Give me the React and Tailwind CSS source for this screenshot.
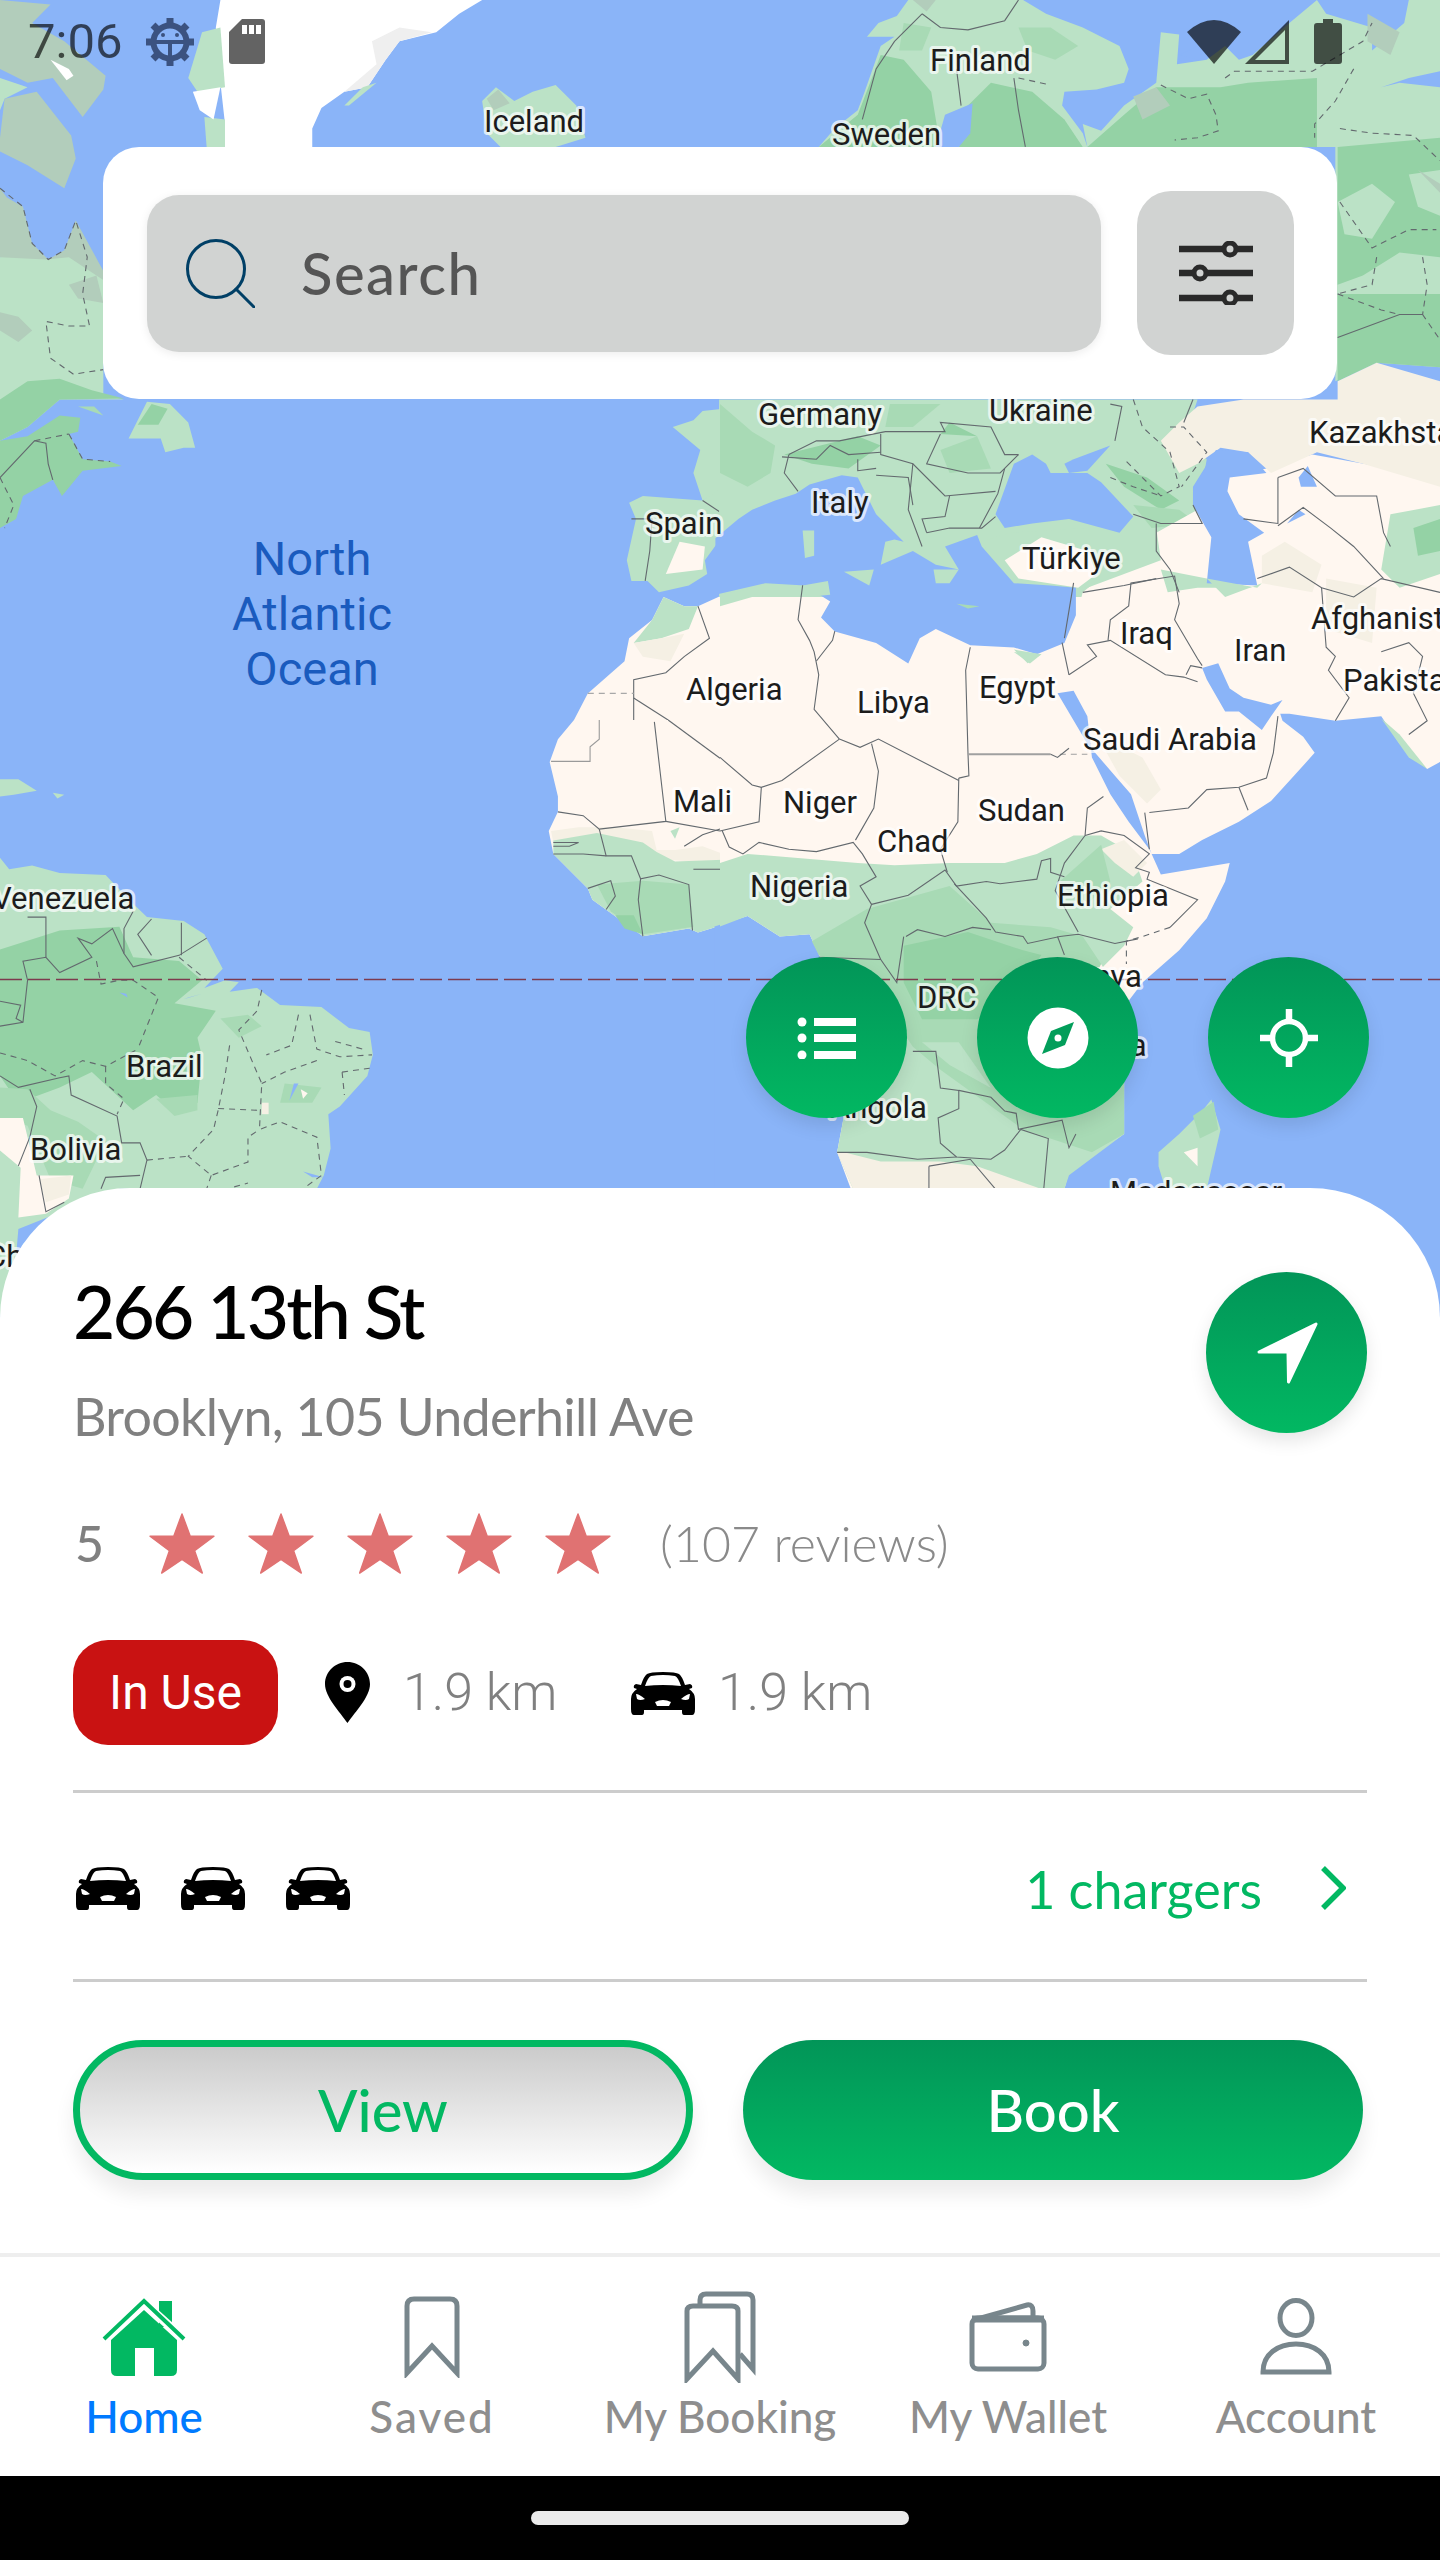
const LIGHT = '#BBE2C6';
const MID = '#94D2A5';
const SOFT = '#A8DAB5';
const TUNDRA = '#B2CDBB';
const DESERT = '#FFF7F0';
const SAND = '#F5F0E4';
const WATER = '#8AB4F8';
const SNOW = '#FFFFFF';

// map shapes are traced per crop of the reference, so each group has its own scale
const westNorth = [
  [TUNDRA, '0,0 110,10 70,50 140,90 230,165 225,195 180,255 115,170 60,180 20,160 0,150'],
  [LIGHT, '0,240 10,215 60,190 0,170'],
  [TUNDRA, '0,300 10,215 80,200 155,295 165,345 140,410 60,360 0,330'],
  [TUNDRA, '0,410 15,430 50,450 70,530 105,565 140,545 165,480 225,590 225,680 150,640 60,600 0,560'],
  [LIGHT, '0,560 100,565 150,560 225,610 225,860 270,870 130,870 60,930 0,960'],
  [TUNDRA, '0,680 40,690 70,720 40,745 0,720'],
  [TUNDRA, '150,620 210,600 225,660 170,650'],
  [MID, '0,870 60,830 130,825 200,850 270,868 130,870 60,930 0,960'],
  [MID, '0,960 60,950 130,905 175,910 170,940 150,945 180,1000 240,1005 265,1015 180,1025 135,1080 115,1045 50,1080 35,1130 0,1150'],
  [SOFT, '170,885 205,885 225,905'],
  [LIGHT, '280,955 320,875 370,880 410,920 425,975 400,975 360,985 350,955'],
  [MID, '300,925 330,880 365,890 345,925'],
  [SNOW, '480,0 1050,0 1000,30 950,70 870,90 840,130 800,190 750,200 700,235 680,280 680,320 480,320 490,270 480,180 470,60'],
  ['#EFEFEF', '810,90 870,60 940,70 870,90 840,130 800,190 750,200 820,140'],
  [LIGHT, '410,170 440,70 480,60 490,190 430,200'],
  [LIGHT, '445,255 490,260 490,320 450,320'],
  [SNOW, '420,200 480,190 465,260 435,240'],
  [LIGHT, '750,230 790,190 820,180 760,230'],
  [SNOW, '110,130 150,150 160,165 145,175'],
  [LIGHT, '1050,220 1080,190 1120,220 1160,200 1210,185 1255,230 1275,300 1210,320 1090,320 1060,290'],
  [TUNDRA, '1060,215 1085,195 1110,225 1075,240'],
  [LIGHT, '1370,1095 1400,1080 1530,1090 1575,1050 1575,1165 1535,1220 1540,1250 1500,1275 1435,1290 1410,1265 1375,1265 1365,1220 1385,1130'],
  [DESERT, '1480,1180 1535,1190 1530,1240 1450,1250'],
  [LIGHT, '1465,930 1510,915 1530,895 1575,890 1575,1060 1530,1090 1510,1030 1525,980'],
  [DESERT, '1445,1300 1490,1320 1520,1320 1575,1295 1575,1568 1250,1568 1280,1510 1360,1440 1370,1390 1420,1350'],
  [LIGHT, '1445,1300 1490,1320 1520,1320 1500,1370 1440,1390 1380,1400 1420,1350'],
  [SAND, '1380,1400 1440,1390 1490,1380 1460,1440 1400,1430'],
];
const westNorthLines = [
  { p: '0,410 50,450 70,530 105,565 140,545 165,480 190,560 180,640 195,710 150,710 100,700 110,780 160,815 225,805', d: true },
  { p: '0,1040 75,960 100,965 105,1010 115,1045' },
  { p: '75,960 150,945', d: true },
  { p: '150,945 180,1000 240,1005', d: true },
  { p: '0,1040 30,1100 10,1150', d: true },
  { p: '1375,1130 1420,1130 1415,1200 1405,1265' },
  { p: '1530,1090 1568,1115' },
  { p: '1520,1320 1545,1390 1490,1430 1450,1465 1380,1480 1380,1568' },
  { p: '1280,1510 1380,1510', d: true, c: '#A8A8A8' },
  { p: '1380,1520 1455,1568' },
];

const southAmerica = [
  [LIGHT, '0,360 20,390 70,380 130,400 230,405 290,480 320,515 400,525 445,560 485,650 445,700 490,680 520,685 500,710 560,700 610,745 700,750 760,805 805,815 812,875 800,930 740,1010 715,1030 720,1120 705,1190 690,1225 260,1225 40,1330 35,1400 10,1480 0,1568 0,1125'],
  [MID, '0,600 130,550 260,540 290,620 390,630 440,680 380,740 470,760 430,830 440,880 430,1000 390,1030 340,980 290,1020 200,920 130,960 40,1000 0,930'],
  [SOFT, '0,960 60,965 110,1020 170,1050 230,1100 180,1225 110,1200 60,1060 0,1040'],
  [SOFT, '340,990 430,980 430,1020 380,1035'],
  [SOFT, '480,780 540,770 570,800 520,830'],
  [SOFT, '620,950 700,960 680,1000 610,1000'],
  [DESERT, '0,1040 50,1040 80,1190 160,1190 150,1250 100,1290 40,1300 45,1170 0,1125'],
  [SAND, '85,1200 155,1190 150,1240 100,1260'],
  [LIGHT, '0,155 40,155 80,185 30,195 0,200'],
  [LIGHT, '115,190 140,195 125,205'],
  [WATER, '640,950 650,950 630,995'],
  [WATER, '660,1180 705,1195 680,1195'],
  [DESERT, '655,965 670,975 660,990'],
  [SAND, '570,1000 585,1000 585,1030 570,1030'],
  [WATER, '260,712 275,715 278,725'],
  [WATER, '400,730 440,715 410,725'],
  [DESERT, '1250,0 1215,50 1197,110 1215,200 1215,240 1195,290 1205,350 1280,440 1290,470 1400,565 1500,545 1520,555 1575,535 1575,0'],
  [SAND, '1200,290 1260,280 1340,280 1420,290 1430,340 1470,340 1530,330 1575,350 1575,375 1450,365 1400,330 1300,300 1205,320'],
  [LIGHT, '1205,315 1300,295 1400,320 1430,345 1470,370 1575,365 1575,535 1520,555 1500,545 1400,565 1290,470 1280,440 1205,350'],
  [SOFT, '1300,430 1400,420 1500,430 1510,540 1400,560 1330,500'],
  [MID, '1340,510 1380,510 1400,560 1360,545'],
  [LIGHT, '1460,290 1480,280 1470,310'],
];
const southAmericaLines = [
  { p: '0,800 50,790 60,680 50,630 100,620 130,660 200,620 170,570 200,585 245,545 270,610 290,645 390,615 450,570' },
  { p: '0,735 45,745 35,780 50,790' },
  { p: '100,620 100,515 60,515' },
  { p: '290,500 270,545 270,610' },
  { p: '330,520 300,560 330,615' },
  { p: '395,530 395,615' },
  { p: '0,930 40,960 130,935 150,930 155,980 255,1035 265,1105 305,1105 320,1150 305,1225' },
  { p: '65,965 80,1010 65,1090 40,1165' },
  { p: '220,1225 230,1195 305,1190' },
  { p: '85,1190 100,1285 140,1260' },
  { p: '210,630 220,690 260,680 290,680 345,725 300,860', d: true },
  { p: '390,620 450,680', d: true },
  { p: '0,870 60,890 120,930 180,890 230,905 300,860', d: true },
  { p: '230,905 230,950 270,990 255,1030', d: true },
  { p: '570,705 560,760 520,810 545,880 570,950 565,1070 610,1050 690,1090 700,1190 660,1225', d: true },
  { p: '650,770 635,850 580,875', d: true },
  { p: '675,770 690,860 740,880 810,875', d: true },
  { p: '745,920 805,910', d: true },
  { p: '690,890 620,920 570,950', d: true },
  { p: '745,920 750,980', d: true },
  { p: '730,840 760,850 790,860', d: true },
  { p: '500,850 490,930 475,1020 465,1070 410,1140 460,1190 540,1155 540,1090 565,1070', d: true },
  { p: '475,1015 565,1020', d: true },
  { p: '320,1150 410,1140', d: true },
  { p: '460,1190 450,1225', d: true },
  { p: '510,1220 540,1210', d: true },
  { p: '1425,5 1450,265 1305,285 1270,250 1215,240' },
  { p: '1450,265 1568,290' },
  { p: '1305,0 1305,50 1285,70 1285,108 1200,108', c: '#9A9A9A' },
  { p: '1455,0 1568,100' },
  { p: '1305,285 1320,355 1375,355 1395,415 1435,405 1500,430 1508,550' },
  { p: '1205,350 1270,350 1320,355' },
  { p: '1205,320 1260,320 1240,330 1205,330' },
  { p: '1395,415 1390,470 1400,565' },
  { p: '1280,440 1330,420 1340,460 1320,495' },
  { p: '1510,390 1568,390' },
  { p: '1490,330 1530,300 1568,285' },
];

const north = [
  [LIGHT, '215,320 250,280 300,240 315,200 350,100 380,80 320,80 345,50 385,35 410,0 660,0 710,30 790,60 870,100 890,150 880,180 820,195 750,200 745,230 790,290 800,320'],
  [LIGHT, '800,320 790,270 830,285 880,230 950,180 960,70 1000,75 995,140 1060,130 1100,100 1130,130 1160,120 1240,50 1300,0 1320,30 1420,60 1420,110 1490,50 1500,0 1568,0 1568,320'],
  [LIGHT, '1340,320 1568,320 1568,800 1430,790 1340,830'],
  [MID, '215,320 300,250 350,120 400,130 460,200 480,320'],
  [MID, '590,180 680,200 750,260 790,320 520,320 540,230'],
  [MID, '800,320 880,250 950,190 1090,190 1150,180 1300,170 1300,320'],
  [MID, '1345,320 1568,300 1568,560 1480,550 1400,600 1345,620'],
  [MID, '1345,640 1568,640 1568,800 1430,790 1345,830'],
  [LIGHT, '1345,440 1420,400 1470,440 1420,520 1360,510'],
  [LIGHT, '1500,380 1568,370 1568,470 1520,450'],
  [TUNDRA, '1520,370 1568,400 1568,420'],
  [TUNDRA, '900,210 950,190 980,230 920,260'],
  [TUNDRA, '1410,30 1480,70 1460,120 1410,90'],
  [SOFT, '650,60 720,60 780,100 730,130 670,110'],
  [SOFT, '400,50 460,60 440,110 390,110'],
  [TUNDRA, '420,0 470,0 450,25'],
  [WATER, '470,320 490,250 550,225 545,290 520,320'],
  [WATER, '1440,190 1480,180 1568,190 1568,155 1500,170'],
  [WATER, '1000,120 1060,90 1045,130'],
  [LIGHT, '-2,870 1040,870 1010,960 1060,1000 1040,1110 1100,1300 960,1300 780,1300 -2,1300'],
  [SOFT, '0,880 70,940 120,970 110,1030 60,1060 0,1030'],
  [MID, '140,990 300,950 350,970 280,1020 200,1010'],
  [SOFT, '370,880 480,880 420,930 360,930'],
  [SOFT, '480,980 560,950 590,1020 500,1030'],
  [MID, '500,920 560,950 480,945'],
  [MID, '840,1010 930,1040 1000,1090 960,1110 880,1060'],
  [SOFT, '900,1100 1000,1110 1040,1140 940,1150'],
  [DESERT, '950,1160 1040,1110 1100,1040 1190,1020 1290,990 1568,1040 1568,1568 950,1568 760,1400 790,1290'],
  [SAND, '1000,920 1040,885 1140,870 1345,870 1345,830 1430,790 1568,830 1568,1060 1400,1010 1300,985 1200,1030 1150,985 1090,975 1040,1010 1000,1030 960,960'],
  [LIGHT, '1460,1120 1568,1100 1568,1250 1480,1280 1440,1240'],
  [MID, '1510,1150 1568,1130 1568,1200 1520,1210'],
  [SAND, '1230,1180 1310,1230 1290,1290 1180,1270 1180,1210'],
  [SAND, '1320,1260 1430,1280 1420,1400 1320,1370'],
  [LIGHT, '960,1240 1060,1260 1160,1280 1040,1280 975,1290'],
  [LIGHT, '570,1180 630,1160 800,1150 950,1150 960,1220 800,1280 690,1275 620,1270'],
  [DESERT, '620,1220 700,1170 800,1200 820,1250 780,1280 650,1260'],
];
const northWater = [
  '-10,1172 40,1130 70,1110 120,1090 165,1075 195,1055 265,1035 300,1040 340,1120 400,1180 380,1175 360,1180 350,1230 420,1200 470,1230 520,1240 490,1190 560,1165 570,1190 640,1270 720,1275 775,1280 775,1340 750,1400 690,1425 640,1410 545,1405 470,1370 435,1390 410,1445 340,1400 250,1375 220,1345 240,1310 185,1275 100,1270 -10,1295',
  '600,1120 640,1010 680,990 710,1010 720,1030 750,1030 800,1030 830,1050 900,1125 870,1160 760,1130 680,1140 620,1150',
  '750,1010 770,1000 850,970 800,1025 760,1030',
  '1030,1060 1080,980 1150,985 1190,1030 1110,1040 1105,1070 1130,1120 1185,1160 1150,1180 1170,1275 1060,1270 1070,1170 1030,1100',
  '1260,1040 1280,1015 1300,1060 1265,1060',
  '1235,1140 1260,1110 1275,1120',
];
const northIslands = [
  [LIGHT, '180,1155 205,1155 205,1210 185,1215'],
  [LIGHT, '270,1245 335,1240 325,1275'],
  [SOFT, '515,1315 565,1320 540,1325'],
  [LIGHT, '465,1240 520,1240 500,1270 470,1270'],
  [LIGHT, '180,1275 235,1265 240,1295 190,1300'],
  [LIGHT, '0,1295 60,1285 100,1270 70,1300 0,1320'],
  [LIGHT, '640,1420 700,1425 675,1445'],
  [LIGHT, '1060,1260 1170,1280 1180,1270 1100,1300'],
];
const northLines = [
  { p: '440,30 380,90 340,150 310,260' },
  { p: '515,150 525,230' },
  { p: '640,170 650,240 665,320' },
  { p: '440,30 480,60 540,65 620,45 650,0' },
  { p: '650,170 720,185', d: true },
  { p: '960,185 1020,215 1060,205 1080,250 1085,285 1040,300 990,305', d: true },
  { p: '1100,170 1120,155 1290,155 1400,90 1420,50', d: true },
  { p: '1380,150 1340,220 1295,270 1295,300', d: true },
  { p: '1350,280 1420,290 1510,295 1568,350', d: true },
  { p: '1350,440 1420,540 1500,500 1560,500', d: true },
  { p: '1430,560 1420,620 1345,640', d: true },
  { p: '1345,640 1440,675 1480,685 1530,685 1568,740', d: true },
  { p: '1345,735 1480,685 1530,685' },
  { p: '1530,560 1540,620 1530,685', d: true },
  { p: '900,870 920,930 980,985 1000,1060 960,1080 880,1000', d: true },
  { p: '980,930 1010,930 1060,985 1005,1060', d: true },
  { p: '850,1040 900,1060 960,1080', d: true },
  { p: '1030,870 1010,920' },
  { p: '150,990 210,960 260,960 360,940 490,940 480,920 590,930 620,990 650,990' },
  { p: '350,945 350,990 420,1010 470,1060 490,1080 600,1070' },
  { p: '480,945 450,1010 540,1030 610,1030 650,990' },
  { p: '620,1020 605,1075 565,1150' },
  { p: '420,1010 410,1110 440,1190' },
  { p: '340,1035 410,1040 420,1100' },
  { p: '150,990 140,1030 170,1070' },
  { p: '135,995 210,1000 240,970 280,990 350,985' },
  { p: '300,1000 300,1025 340,1020' },
  { p: '450,1160 500,1150 570,1150 600,1125' },
  { p: '500,1080 490,1125 440,1130 450,1160' },
  { p: '850,880 875,885 860,960' },
  { p: '900,1120 960,1140 1050,1140 1030,1100' },
  { p: '950,1140 950,1200 980,1240 1000,1290' },
  { p: '790,1290 880,1275 950,1260' },
  { p: '1215,1040 1215,1140 1140,1130' },
  { p: '1215,1040 1270,1020 1340,1080 1430,1080 1445,1160 1460,1190' },
  { p: '1215,1145 1270,1105 1330,1150 1380,1190 1445,1260' },
  { p: '1170,1260 1240,1235 1310,1280 1380,1300 1440,1260 1568,1290' },
];

const south = [
  [DESERT, '0,50 1568,-10 1568,440 1300,900 880,1370 6,1370 6,800 0,800'],
  [SAND, '1390,0 1568,0 1568,200 1440,250 1500,330 1340,340 1250,250 1240,120'],
  [SAND, '1000,90 1060,70 1100,150 1000,150'],
  [SAND, '820,380 920,430 960,500 930,530 870,470'],
];
const southWater = [
  '735,290 770,285 800,340 810,430 850,510 890,570 935,630 940,640 925,600 895,510 860,470 800,400',
  '940,640 1000,640 1050,610 1130,570 1200,525 1250,470 1295,420 1270,385 1225,350 1220,335 1240,335 1340,350 1440,340 1480,400 1540,455 1568,440 1568,1370 750,1370 760,1330 880,1250 880,1020 890,960 920,920 1000,850 1060,780 1100,700 1110,660 960,685',
  '1050,235 1085,225 1110,280 1140,300 1200,315 1225,305 1200,340 1180,370 1130,330 1100,330 1060,260',
  '-12,798 60,775 130,820 195,815 225,880 240,1000 270,1210 255,1290 285,1370 -12,1370',
];
const southGreen = [
  [LIGHT, '0,660 60,640 300,660 380,665 500,660 620,660 690,640 770,600 830,600 900,640 920,700 850,760 900,800 880,840 830,890 880,960 880,1250 760,1340 750,1370 290,1370 255,1290 270,1210 240,1000 225,880 195,815 130,820 60,775 0,798'],
  [SOFT, '200,830 320,760 500,710 590,790 720,800 790,820 830,880 880,1000 880,1250 810,1290 660,1240 480,1110 420,1060 380,1000 300,900 215,860'],
  [MID, '400,840 540,810 660,850 700,860 640,950 560,1000 440,1000 400,920'],
  [LIGHT, '440,1050 520,1050 590,1150 500,1100'],
  [SAND, '255,1290 290,1370 700,1370 560,1320 480,1310 350,1310 270,1290'],
  [DESERT, '830,880 880,960 880,1010 820,900'],
  [SAND, '830,630 880,610 930,660 900,690 860,660'],
  [SOFT, '740,700 830,620 850,700 790,760'],
  [LIGHT, '955,1290 1000,1250 1050,1200 1070,1175 1090,1240 1060,1370 970,1370 955,1320'],
  [SOFT, '1030,1210 1075,1180 1085,1240 1045,1260'],
  [DESERT, '1010,1290 1040,1280 1040,1320'],
  [LIGHT, '1440,345 1480,380 1540,455 1500,430'],
  [LIGHT, '640,195 700,205 670,225'],
];
const southLines = [
  { p: '180,55 170,130 195,175 205,200 215,250 205,325 260,390' },
  { p: '250,155 245,175 210,220' },
  { p: '545,190 535,240 540,420 542,470 520,475' },
  { p: '260,390 305,408 345,390 520,480' },
  { p: '260,390 135,480 90,495 70,490 0,430' },
  { p: '330,400 345,460 335,540 295,610' },
  { p: '520,475 518,570 480,630 495,680' },
  { p: '90,495 85,570 0,590' },
  { p: '5,590 20,625 50,640 85,615 150,630 210,635 290,615 310,640 340,690 305,710 330,750 315,790 350,870' },
  { p: '330,750 410,730 490,675 515,710 580,700 610,705 690,695 700,655 720,650 720,680 750,690' },
  { p: '510,705 580,780 600,810 660,820 670,835 740,820 780,815 860,835 910,825' },
  { p: '405,820 430,805 490,820 550,800 590,805' },
  { p: '400,820 385,920 350,870 215,865' },
  { p: '540,423 720,423', c: '#A0A0A0', w: 2 },
  { p: '740,423 800,423', c: '#A0A0A0', d: true },
  { p: '720,423 735,430 760,410' },
  { p: '795,600 800,540 835,515' },
  { p: '795,600 750,660 730,720 780,810' },
  { p: '795,600 830,590 880,600 935,640 905,670 935,680 930,695 1040,740 980,800' },
  { p: '980,800 920,820 885,830 885,880', d: true },
  { p: '735,820 750,860' },
  { p: '420,1070 470,1070 480,1150 520,1155 520,1195 475,1215 480,1270 515,1300 590,1305 620,1285 655,1240 715,1260 705,1370' },
  { p: '255,1290 320,1290 430,1305 515,1300' },
  { p: '455,1320 455,1370' },
  { p: '455,1320 545,1305 600,1370' },
  { p: '520,1155 590,1170 620,1200 645,1205 650,1240 745,1220 760,1280 775,1250' },
  { p: '760,250 820,210 800,185 850,175 970,250 1010,255 1040,265' },
  { p: '935,550 1020,540 1060,500 1130,495 1190,475 1205,420 1215,340' },
  { p: '1130,495 1150,545' },
  { p: '925,550 935,630' },
  { p: '750,170 770,50' },
  { p: '745,180 760,250' },
  { p: '845,175 850,130 890,100 895,50 990,35 1000,95 990,130 1040,215 1050,230' },
  { p: '1015,250 1025,230 1050,235' },
  { p: '1310,60 1320,190 1340,210 1325,240 1370,300 1340,350' },
  { p: '1440,200 1500,180 1530,210 1510,290 1540,350 1500,380' },
];

const labels = [
  ['Iceland', 484, 132], ['Finland', 930, 71], ['Sweden', 832, 145], ['Germany', 758, 425],
  ['Ukraine', 989, 421], ['Kazakhstan', 1309, 443], ['Spain', 645, 534], ['Italy', 811, 513],
  ['Türkiye', 1022, 569], ['Iraq', 1120, 644], ['Iran', 1234, 661], ['Afghanistan', 1311, 629],
  ['Pakistan', 1343, 691], ['Egypt', 979, 698], ['Libya', 857, 713], ['Algeria', 686, 700],
  ['Saudi Arabia', 1083, 750], ['Sudan', 978, 821], ['Niger', 783, 813], ['Mali', 673, 812],
  ['Chad', 877, 852], ['Nigeria', 750, 897], ['Ethiopia', 1057, 906], ['DRC', 917, 1008],
  ['Angola', 830, 1118], ['Kenya', 1058, 987], ['Tanzania', 1022, 1056], ['Madagascar', 1110, 1203],
  ['Venezuela', -8, 909], ['Brazil', 126, 1077], ['Bolivia', 30, 1160], ['Chile', -14, 1267],
];

function Shapes({ items }) {
  return items.map(([fill, points], i) => <polygon key={i} fill={fill} points={points} />);
}

function Borders({ items }) {
  return items.map((line, i) => (
    <polyline
      key={i}
      points={line.p}
      fill="none"
      stroke={line.c || '#63696E'}
      strokeWidth={line.w || 1.1}
      strokeDasharray={line.d ? '6 5' : undefined}
      vectorEffect="non-scaling-stroke"
    />
  ));
}

function MapBackground() {
  return (
    <svg className="absolute left-0 top-0 h-[1330px] w-[1440px]" viewBox="0 0 1440 1330">
      <rect width="1440" height="1330" fill={WATER} />
      <g transform="translate(0,0) scale(0.4592)">
        <Shapes items={westNorth} />
        <Borders items={westNorthLines} />
      </g>
      <g transform="translate(0,720) scale(0.4592,0.3827)">
        <Shapes items={southAmerica} />
        <Borders items={southAmericaLines} />
      </g>
      <g transform="translate(720,560) scale(0.4592)">
        <Shapes items={south} />
      </g>
      <g transform="translate(720,0) scale(0.4592)">
        <Shapes items={north} />
        {northWater.map((points, i) => <polygon key={i} fill={WATER} points={points} />)}
        <Shapes items={northIslands} />
      </g>
      <g transform="translate(720,560) scale(0.4592)">
        {southWater.map((points, i) => <polygon key={i} fill={WATER} points={points} />)}
        <Shapes items={southGreen} />
        <Borders items={southLines} />
      </g>
      <g transform="translate(720,0) scale(0.4592)">
        <Borders items={northLines} />
      </g>
      <line x1="0" x2="1440" y1="979.5" y2="979.5" stroke="#7D3A4E" strokeWidth="1.5" strokeDasharray="22 6" />
      <g className="[font-family:Roboto,sans-serif]" fontSize="31" fill="#1C1C1C" stroke="#FFFFFF" strokeOpacity="0.7" strokeWidth="6" strokeLinejoin="round">
        {labels.map(([name, x, y]) => (
          <text key={name} x={x} y={y} className="[paint-order:stroke]">{name}</text>
        ))}
      </g>
      <g className="[font-family:Roboto,sans-serif]" fontSize="47" fill="#1A5BBE" textAnchor="middle">
        <text x="312" y="575">North</text>
        <text x="312" y="630">Atlantic</text>
        <text x="312" y="685">Ocean</text>
      </g>
    </svg>
  );
}

function StatusBar() {
  return (
    <div className="flex h-[84px] items-center justify-between pl-[28px] pr-[98px] pb-[1px]">
      <div className="flex items-center">
        <span className="w-[117px] text-[49px] leading-none text-black/65 [font-family:Roboto,sans-serif]">7:06</span>
        <svg width="50" height="50" viewBox="0 0 50 50" className="opacity-70" fill="none" stroke="#1B2A4E">
          <circle cx="25" cy="25" r="16.5" strokeWidth="6" />
          <g strokeWidth="7">
            <path d="M25 1v6M25 43v6M1 25h6M43 25h6M8 8l4.500 4.500M37.500 37.500L42 42M42 8l-4.500 4.500M12.500 37.500L8 42" />
          </g>
          <path d="M10 25h30M25 25v15" strokeWidth="4" />
          <circle cx="18" cy="18" r="2" fill="#1B2A4E" stroke="none" />
          <circle cx="32" cy="18" r="2" fill="#1B2A4E" stroke="none" />
        </svg>
        <svg width="36" height="45" viewBox="0 0 36 45" className="ml-[34px]">
          <path d="M13 0h20q3 0 3 3v39q0 3-3 3H3q-3 0-3-3V13z" fill="#636363" />
          <path d="M13 6h5v9h-5zM20 6h5v9h-5zM27 6h5v9h-5z" fill="#FFFFFF" />
        </svg>
      </div>
      <div className="flex items-center">
        <svg width="54" height="44" viewBox="0 0 54 44" className="opacity-65">
          <path d="M0 12Q27-12 54 12L27 44z" fill="#000" />
        </svg>
        <svg width="44" height="44" viewBox="0 0 44 44" className="ml-[4px] opacity-65">
          <path d="M0 44L44 0v44zM10 40h30V10z" fill="#000" fillRule="evenodd" />
        </svg>
        <svg width="28" height="45" viewBox="0 0 28 45" className="ml-[25px] opacity-65">
          <path d="M9 0h10v4h6q3 0 3 3v35q0 3-3 3H3q-3 0-3-3V7q0-3 3-3h6z" fill="#000" />
        </svg>
      </div>
    </div>
  );
}

function SearchCard() {
  return (
    <div className="ml-[103px] mt-[63px] flex h-[252px] w-[1234px] items-center gap-[36px] rounded-[36px] bg-white pl-[44px]">
      <div className="flex h-[157px] w-[954px] items-center rounded-[32px] bg-[#D1D3D2] pl-[38px] shadow-[0_2px_10px_rgba(0,0,0,0.08)]">
        <svg width="70" height="70" viewBox="0 0 70 70" fill="none" stroke="#003F66" strokeWidth="3">
          <circle cx="31" cy="31" r="28.500" />
          <path d="M51 51l18 18" strokeLinecap="round" />
        </svg>
        <span className="ml-[46px] text-[58px] font-medium leading-none tracking-[1.500px] text-[#555555] [font-family:Lato,sans-serif]">Search</span>
      </div>
      <div className="flex h-[164px] w-[157px] items-center justify-center rounded-[34px] bg-[#D1D3D2]">
        <svg width="76" height="64" viewBox="0 0 76 64" fill="none" stroke="#2A2A2A">
          <path d="M1 8h74M1 32h74M1 57h74" strokeWidth="6.500" />
          <circle cx="52" cy="8" r="6" fill="#D1D3D2" strokeWidth="5" />
          <circle cx="22" cy="32" r="6" fill="#D1D3D2" strokeWidth="5" />
          <circle cx="52" cy="57" r="6" fill="#D1D3D2" strokeWidth="5" />
        </svg>
      </div>
    </div>
  );
}

function Fab({ children }) {
  return (
    <div className="flex h-[161px] w-[161px] items-center justify-center rounded-full bg-gradient-to-b from-[#029558] to-[#02B862] shadow-[0_8px_18px_rgba(0,0,0,0.1)]">
      {children}
    </div>
  );
}

function MapButtons() {
  return (
    <div className="mt-[558px] flex justify-end gap-[70px] pr-[71px]">
      <Fab>
        <svg width="60" height="42" viewBox="0 0 60 42" fill="#FFFFFF">
          <circle cx="5" cy="5" r="4.500" />
          <circle cx="5" cy="21" r="4.500" />
          <circle cx="5" cy="38" r="4.500" />
          <path d="M17 1h42v8H17zM17 17h42v8H17zM17 34h42v8H17z" />
        </svg>
      </Fab>
      <Fab>
        <svg width="62" height="62" viewBox="-31 -31 62 62">
          <circle r="30.500" fill="#FFFFFF" />
          <path d="M16-16L7 7-16 16-7-7z" fill="#029E5A" />
          <circle r="3.500" fill="#FFFFFF" />
        </svg>
      </Fab>
      <Fab>
        <svg width="60" height="60" viewBox="-30 -30 60 60" fill="none" stroke="#FFFFFF" strokeWidth="5.500">
          <circle r="16.500" />
          <path d="M0-29v12M0 17v12M-29 0h12M17 0h12" strokeWidth="6.500" />
        </svg>
      </Fab>
    </div>
  );
}

function Star() {
  return (
    <svg width="66" height="61" viewBox="-1 -1 68 63">
      <path d="M33 0l8.500 23H66L46 38l8 23-21-14-21 14 8-23L0 23h24.500z" fill="#E07272" stroke="#E07272" strokeWidth="1.500" strokeLinejoin="round" />
    </svg>
  );
}

function Car() {
  return (
    <svg width="66" height="44" viewBox="0 0 66 44">
      <path d="M17 3Q20 1 33 1T49 3Q52 5 55 14L60 13Q63 14 62 17L59 18Q65 22 65 28V38Q65 44 62 44H54Q52 44 52 41V39H14V41Q14 44 12 44H4Q1 44 1 38V28Q1 22 7 18L4 17Q3 14 6 13L11 14Q14 5 17 3Z" fill="#000" />
      <path d="M15 15Q18 6 21 5 33 3 45 5 48 6 51 15 33 13 15 15Z" fill="#FFF" />
      <path d="M6 23Q9 23 15 28 10 30 7 28ZM60 23Q57 23 51 28 56 30 59 28Z" fill="#FFF" />
      <path d="M25 31Q33 27 41 31L39 35H27Z" fill="#FFF" />
    </svg>
  );
}

function Details() {
  return (
    <div className="relative flex flex-1 flex-col rounded-t-[130px] bg-white pl-[73px] pr-[73px] pt-[84px]">
      <div className="flex items-start justify-between">
        <div className="-mt-[1px]">
          <div className="h-[80px] text-[73px] font-medium leading-[80px] tracking-[-2.800px] text-black [font-family:Lato,sans-serif]">266 13th St</div>
          <div className="mt-[35px] h-[60px] text-[52px] leading-[60px] tracking-[-0.700px] text-[#808080] [font-family:Lato,sans-serif]">Brooklyn, 105 Underhill Ave</div>
        </div>
        <div className="flex h-[161px] w-[161px] items-center justify-center rounded-full bg-gradient-to-b from-[#029558] to-[#02B862] shadow-[0_8px_18px_rgba(0,0,0,0.1)]">
          <svg width="64" height="64" viewBox="-32 -32 64 64">
            <path d="M29-29L1.500 29 1-1-28-1z" fill="#FFFFFF" stroke="#FFFFFF" strokeWidth="3" strokeLinejoin="round" />
          </svg>
        </div>
      </div>

      <div className="mt-[66px] flex h-[62px] items-center">
        <span className="ml-[2px] w-[74px] text-[50px] font-medium leading-none text-[#808080] [font-family:Lato,sans-serif]">5</span>
        <div className="flex gap-[33px]">
          <Star /><Star /><Star /><Star /><Star />
        </div>
        <span className="ml-[49px] text-[50px] font-light leading-none text-[#8A8A8A] [font-family:Lato,sans-serif]">(107 reviews)</span>
      </div>

      <div className="mt-[66px] flex h-[105px] items-center">
        <div className="flex h-[105px] w-[205px] items-center justify-center rounded-[35px] bg-[#C91212] text-[48px] leading-none text-white [font-family:Roboto,sans-serif]">In Use</div>
        <svg width="45" height="61" viewBox="0 0 45 61" className="ml-[47px]">
          <path d="M22.500 0C10 0 0 10 0 22 0 35 15 50 22.500 61 30 50 45 35 45 22 45 10 35 0 22.500 0Z" fill="#000" />
          <circle cx="22.500" cy="22" r="8" fill="#FFF" />
          <circle cx="22.500" cy="22" r="4" fill="#000" />
        </svg>
        <span className="ml-[33px] w-[227px] text-[52px] font-light leading-none text-[#808080] [font-family:Roboto,sans-serif]">1.9 km</span>
        <Car />
        <span className="ml-[22px] text-[52px] font-light leading-none text-[#808080] [font-family:Roboto,sans-serif]">1.9 km</span>
      </div>

      <div className="mt-[45px] h-[3px] bg-[#CCCCCC]" />
      <div className="flex h-[186px] items-center justify-between pl-[2px] pr-[21px] pt-[3px]">
        <div className="flex gap-[39px]">
          <Car /><Car /><Car />
        </div>
        <div className="flex items-center">
          <span className="mt-[3px] text-[52px] leading-none text-[#02B862] [font-family:Lato,sans-serif]">1 chargers</span>
          <svg width="26" height="44" viewBox="0 0 26 44" fill="none" stroke="#02B862" strokeWidth="5.500" className="ml-[58px]">
            <path d="M3 2l20 20L3 42" />
          </svg>
        </div>
      </div>
      <div className="h-[3px] bg-[#CCCCCC]" />

      <div className="mt-[58px] flex gap-[50px]">
        <div className="flex h-[140px] w-[620px] items-center justify-center rounded-full border-[7px] border-[#02B862] bg-gradient-to-b from-[#CBCBCB] to-white text-[58px] font-medium leading-none text-[#02B862] shadow-[0_14px_20px_rgba(0,0,0,0.08)] [font-family:Lato,sans-serif]">View</div>
        <div className="flex h-[140px] w-[620px] items-center justify-center rounded-full bg-gradient-to-b from-[#029558] to-[#02B862] text-[58px] font-medium leading-none text-white shadow-[0_14px_20px_rgba(0,0,0,0.08)] [font-family:Lato,sans-serif]">Book</div>
      </div>
    </div>
  );
}

const GRAY_ICON = '#78868C';

const navIcons = {
  Home: (
    <svg width="84" height="78" viewBox="0 0 84 78">
      <path d="M57 3h13v26H57z" fill="#02B862" />
      <path d="M42 5L82 41" fill="none" stroke="#FFF" strokeWidth="9" />
      <path d="M2 41L42 3l40 38" fill="none" stroke="#02B862" strokeWidth="4" />
      <path d="M42 12L75 42V72Q75 78 69 78H52V50H33V78H15Q9 78 9 72V42Z" fill="#02B862" />
    </svg>
  ),
  Saved: (
    <svg width="56" height="82" viewBox="0 0 56 82" fill="none" stroke={GRAY_ICON} strokeWidth="5">
      <path d="M3 77V10Q3 3 10 3H46Q53 3 53 10V77L28 50Z" />
    </svg>
  ),
  'My Booking': (
    <svg width="72" height="92" viewBox="0 0 72 92" fill="none" stroke={GRAY_ICON} strokeWidth="5">
      <path d="M16 13V9Q16 3 22 3H63Q69 3 69 9V78L56 63" />
      <path d="M3 88V20Q3 15 9 15H48Q54 15 54 20V88L29 60Z" />
    </svg>
  ),
  'My Wallet': (
    <svg width="78" height="70" viewBox="0 0 78 70" fill={GRAY_ICON} stroke={GRAY_ICON} strokeWidth="5">
      <path d="M5 18L58 3Q64 2 64 9V15" fill="none" />
      <rect x="3" y="16" width="72" height="51" rx="6" fill="none" />
      <path d="M3 17H75" strokeWidth="7" />
      <circle cx="57" cy="41" r="3" strokeWidth="1" />
    </svg>
  ),
  Account: (
    <svg width="72" height="78" viewBox="0 0 72 78" fill="none" stroke={GRAY_ICON} strokeWidth="5">
      <ellipse cx="36" cy="20" rx="16" ry="17.500" />
      <path d="M3 74C3 56 18 46 36 46S69 56 69 74Z" />
    </svg>
  ),
};

function BottomNav() {
  const items = ['Home', 'Saved', 'My Booking', 'My Wallet', 'Account'];
  return (
    <div className="grid h-[223px] grid-cols-5 border-t-[4px] border-[#EEEEEE] bg-white pt-[34px]">
      {items.map((name) => (
        <div key={name} className="flex flex-col items-center">
          <div className="flex h-[92px] items-center justify-center">{navIcons[name]}</div>
          <span className={`mt-[8px] text-[44px] font-medium leading-[50px] [font-family:Lato,sans-serif] ${name === 'Home' ? 'text-[#007AFF]' : 'text-[#8E8E8E]'} ${name === 'Saved' ? 'tracking-[2px]' : ''}`}>
            {name}
          </span>
        </div>
      ))}
    </div>
  );
}

export default function App() {
  return (
    <div className="relative flex h-[2560px] w-[1440px] flex-col overflow-hidden bg-white">
      <MapBackground />
      <div className="relative h-[1188px] shrink-0">
        <StatusBar />
        <SearchCard />
        <MapButtons />
      </div>
      <Details />
      <div className="relative">
        <BottomNav />
      </div>
      <div className="relative flex h-[84px] items-center justify-center bg-black">
        <div className="h-[14px] w-[378px] rounded-full bg-[#EBEBEB]" />
      </div>
    </div>
  );
}
